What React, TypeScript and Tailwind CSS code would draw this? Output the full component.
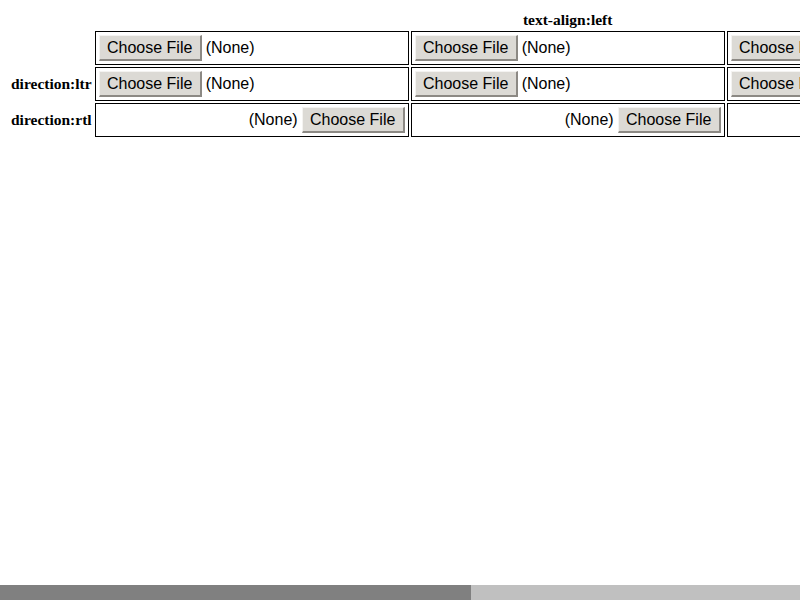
import React from "react";

function FileBtn() {
  return (
    <div className="box-border flex h-[26px] w-[103px] shrink-0 items-center justify-center border-t border-l border-t-[#f4f3f1] border-l-[#f4f3f1] border-r-2 border-b-2 border-r-[#8c8984] border-b-[#8c8984] bg-[#dcdad5] text-[16px] leading-none text-black">
      Choose File
    </div>
  );
}

function FileCell({ rtl }: { rtl?: boolean }) {
  return (
    <td className="border border-black p-[1px] align-middle">
      <div
        className={
          "flex h-[30px] w-[310px] items-center gap-[4px] px-[2px] font-['Liberation_Sans',Arial,sans-serif] text-[16px] whitespace-nowrap text-black " +
          (rtl ? "justify-end" : "justify-start")
        }
      >
        {rtl ? (
          <>
            <span>(None)</span>
            <FileBtn />
          </>
        ) : (
          <>
            <FileBtn />
            <span>(None)</span>
          </>
        )}
      </div>
    </td>
  );
}

export default function App() {
  const cols = [0, 1, 2, 3];
  return (
    <div className="flex h-[600px] w-[800px] flex-col overflow-hidden bg-white font-['Liberation_Serif','Times_New_Roman',serif] text-black">
      <div className="min-h-0 flex-1 overflow-hidden">
        <div className="w-max p-2">
          <table className="border-separate border-spacing-[2px]">
            <thead>
              <tr>
                <th className="p-[1px] text-[15.5px] leading-[17px] font-bold"></th>
                <th className="p-[1px] text-[15.5px] leading-[17px] font-bold"></th>
                <th className="p-[1px] text-[15.5px] leading-[17px] font-bold">text-align:left</th>
                <th className="p-[1px] text-[15.5px] leading-[17px] font-bold"></th>
                <th className="p-[1px] text-[15.5px] leading-[17px] font-bold"></th>
              </tr>
            </thead>
            <tbody>
              <tr>
                <th className="p-[1px] text-[15.5px] font-bold"></th>
                {cols.map((c) => (
                  <FileCell key={c} />
                ))}
              </tr>
              <tr>
                <th className="p-[1px] text-[15.5px] font-bold whitespace-nowrap">direction:ltr</th>
                {cols.map((c) => (
                  <FileCell key={c} />
                ))}
              </tr>
              <tr>
                <th className="p-[1px] text-[15.5px] font-bold whitespace-nowrap">direction:rtl</th>
                {cols.map((c) => (
                  <FileCell key={c} rtl />
                ))}
              </tr>
            </tbody>
          </table>
        </div>
      </div>
      <div className="flex h-[15px] shrink-0 bg-[#c0c0c0]">
        <div className="h-full w-[471px] bg-[#808080]"></div>
      </div>
    </div>
  );
}
